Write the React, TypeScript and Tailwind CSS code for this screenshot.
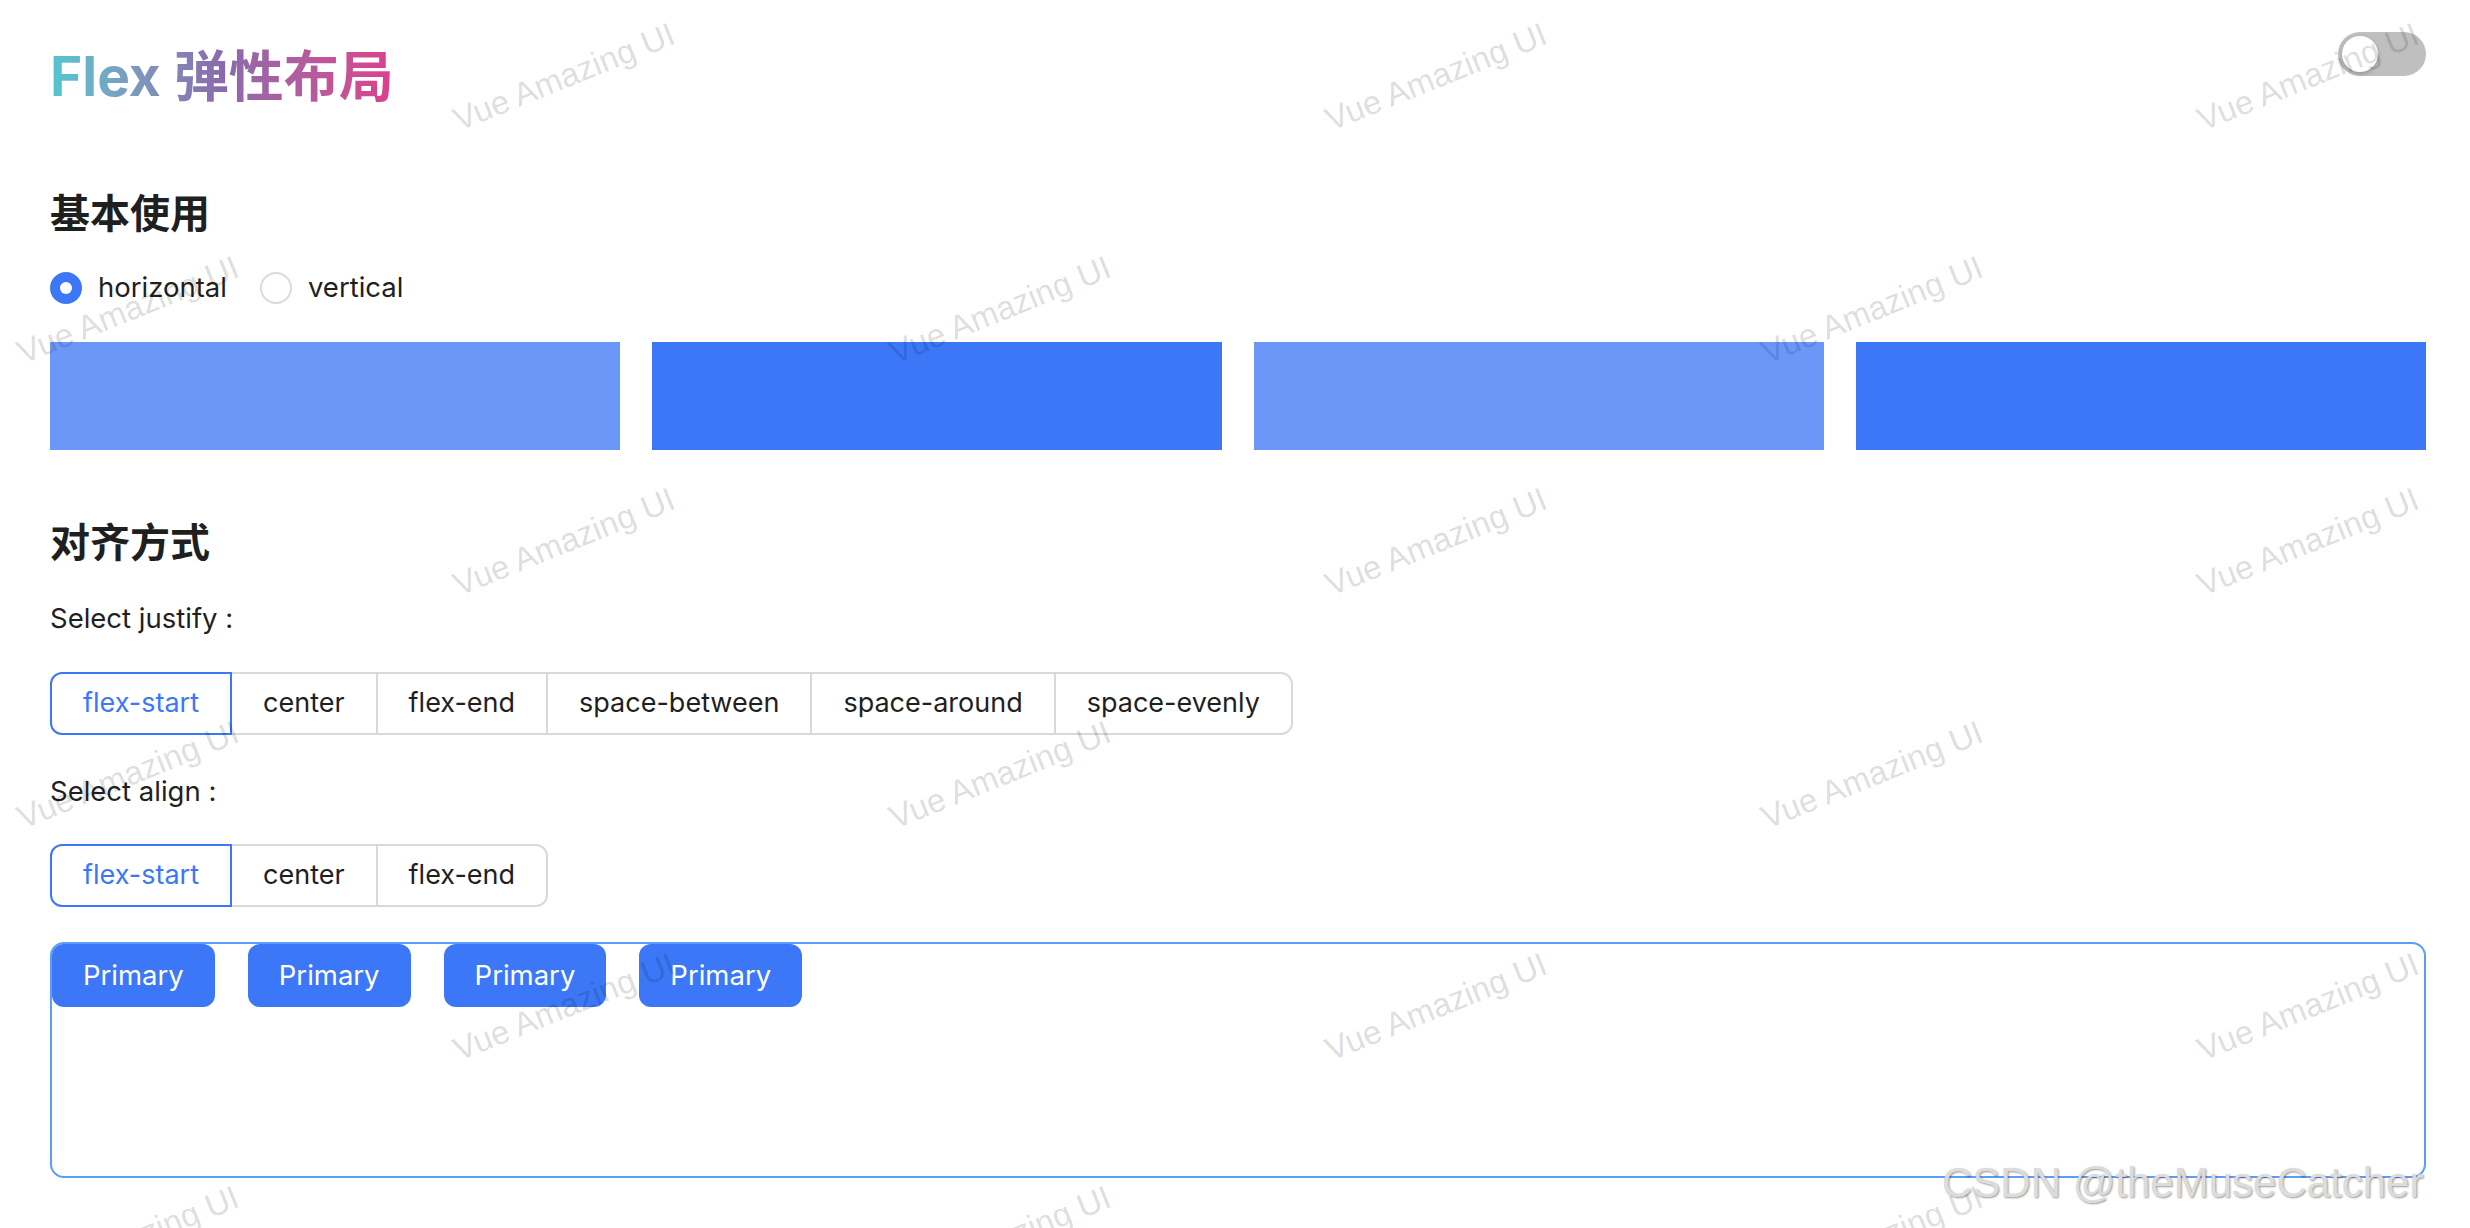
import React, { useState } from 'react';

const JUSTIFY = ['flex-start', 'center', 'flex-end', 'space-between', 'space-around', 'space-evenly'];
const ALIGN = ['flex-start', 'center', 'flex-end'];

// watermark grid, measured from the page
const MARK_ROWS = [0, 1, 2, 3, 4, 5];
const MARK_COLS = [0, 1, 2, 3];

const Watermark = () => (
  <div className="pointer-events-none absolute inset-0 z-20 overflow-hidden">
    {MARK_ROWS.map((r) =>
      MARK_COLS.map((c) => {
        const x = (r % 2 === 0 ? -308 : 128) + c * 872;
        const y = 77 + r * 232.5;
        return (
          <span
            key={`${r}-${c}`}
            className="absolute -translate-x-1/2 -translate-y-1/2 rotate-[-22deg] whitespace-nowrap font-['Liberation_Sans',Arial,sans-serif] text-[33px] leading-[40px] text-[rgba(0,0,0,0.15)]"
            style={{ left: x, top: y }}
          >
            Vue Amazing UI
          </span>
        );
      })
    )}
  </div>
);

const Segmented = ({ options, value, onChange }: { options: string[]; value: string; onChange: (v: string) => void }) => (
  <div className="flex self-start">
    {options.map((opt, i) => {
      const active = opt === value;
      return (
        <button
          key={opt}
          onClick={() => onChange(opt)}
          className={[
            'relative flex h-[63px] items-center border-2 bg-white px-[31px] text-[27px]',
            i > 0 ? '-ml-[2px]' : '',
            i === 0 ? 'rounded-l-[12px]' : '',
            i === options.length - 1 ? 'rounded-r-[12px]' : '',
            active ? 'z-10 border-[#3b77f6] text-[#3b77f6]' : 'border-[#d9d9d9] text-[#1f1f1f]',
          ].join(' ')}
        >
          {opt}
        </button>
      );
    })}
  </div>
);

const Radio = ({ label, checked, onClick }: { label: string; checked: boolean; onClick: () => void }) => (
  <label className="flex cursor-pointer items-center gap-[16px]" onClick={onClick}>
    {checked ? (
      <span className="flex h-[32px] w-[32px] items-center justify-center rounded-full bg-[#3b77f6]">
        <span className="h-[12px] w-[12px] rounded-full bg-white" />
      </span>
    ) : (
      <span className="h-[32px] w-[32px] rounded-full border-2 border-[#d9d9d9] bg-white" />
    )}
    <span className="text-[27.5px]">{label}</span>
  </label>
);

export default function App() {
  const [dir, setDir] = useState('horizontal');
  const [justify, setJustify] = useState('flex-start');
  const [align, setAlign] = useState('flex-start');

  return (
    <div className="relative min-h-screen w-full overflow-hidden bg-white font-['Inter','Noto_Sans_CJK_SC',sans-serif] text-[#1f1f1f]">
      {/* theme switch */}
      <div className="absolute right-[44px] top-[32px] h-[44px] w-[88px] rounded-full bg-[#bfbfbf]">
        <div className="absolute left-[4px] top-[4px] h-[36px] w-[36px] rounded-full bg-white shadow-[0_2px_4px_rgba(0,35,11,0.25)]" />
      </div>

      <div className="flex flex-col pl-[50px] pr-[44px] pt-[44px]">
        <h1 className="self-start bg-linear-to-r from-[#52c6d0] via-[#8a6aac] to-[#dc3f8c] bg-clip-text text-[55px] font-bold leading-[65px] text-transparent">
          Flex 弹性布局
        </h1>

        <h2 className="mt-[77px] text-[40px] font-semibold leading-[56px]">基本使用</h2>
        <div className="mt-[26px] flex h-[40px] items-center gap-[33px]">
          <Radio label="horizontal" checked={dir === 'horizontal'} onClick={() => setDir('horizontal')} />
          <Radio label="vertical" checked={dir === 'vertical'} onClick={() => setDir('vertical')} />
        </div>
        <div className="mt-[34px] grid h-[108px] grid-cols-4 gap-[32px]">
          <div className="bg-[#6b98f8]" />
          <div className="bg-[#3b77f6]" />
          <div className="bg-[#6b98f8]" />
          <div className="bg-[#3b77f6]" />
        </div>

        <h2 className="mt-[65px] text-[40px] font-semibold leading-[56px]">对齐方式</h2>
        <p className="mt-[27px] text-[27.5px] leading-[40px]">Select justify :</p>
        <div className="mt-[34px] flex">
          <Segmented options={JUSTIFY} value={justify} onChange={setJustify} />
        </div>
        <p className="mt-[36px] text-[27.5px] leading-[40px]">Select align :</p>
        <div className="mt-[33px] flex">
          <Segmented options={ALIGN} value={align} onChange={setAlign} />
        </div>

        <div className="mt-[35px] flex h-[236px] items-start gap-[33px] rounded-[14px] border-2 border-[#5b9ef7]">
          {[1, 2, 3, 4].map((n) => (
            <button
              key={n}
              className="flex h-[63px] items-center rounded-[12px] bg-[#3b77f6] px-[31px] text-[27.5px] text-white"
            >
              Primary
            </button>
          ))}
        </div>
      </div>

      <Watermark />

      <div className="pointer-events-none absolute left-[1942px] top-[1158px] z-30 whitespace-nowrap font-['Liberation_Sans',Arial,sans-serif] text-[42px] leading-[50px] text-[#dcdcdc] [text-shadow:1px_1px_2px_rgba(0,0,0,0.4)]">
        CSDN @theMuseCatcher
      </div>
    </div>
  );
}
